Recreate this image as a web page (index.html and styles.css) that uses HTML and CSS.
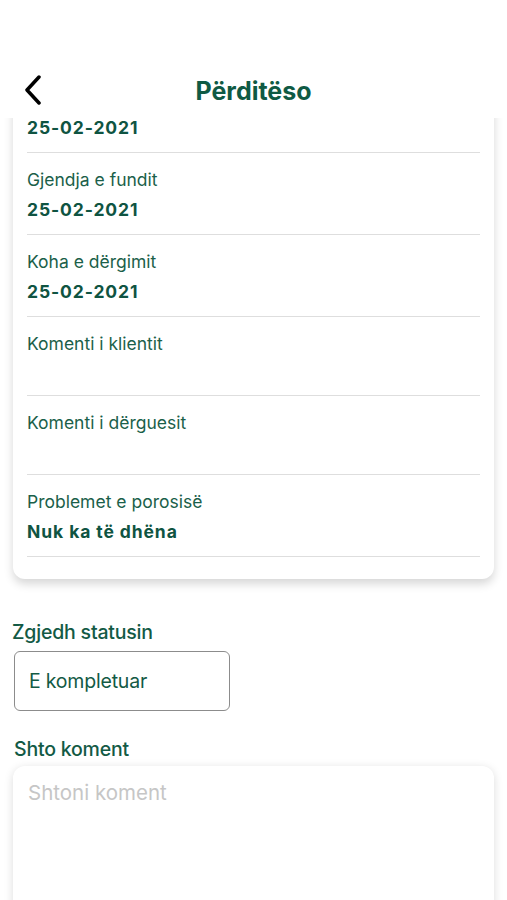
FILE: index.html
```html
<!DOCTYPE html>
<html lang="sq">
<head>
    <meta charset="UTF-8">
    <title>Përditëso</title>
    <link rel="stylesheet" href="styles.css">
</head>
<body>
    <header class="topbar">
        <button class="back" aria-label="Kthehu">
            <svg width="18" height="30" viewBox="0 0 18 30"><path d="M15 2 L3 15 L15 28" fill="none" stroke="#000" stroke-width="3.5" stroke-linecap="round" stroke-linejoin="round"/></svg>
        </button>
        <h1 class="title">Përditëso</h1>
    </header>

    <main class="content">
        <section class="card">
            <div class="row">
                <div class="label">Data e porosisë</div>
                <div class="value">25-02-2021</div>
            </div>
            <div class="row">
                <div class="label">Gjendja e fundit</div>
                <div class="value">25-02-2021</div>
            </div>
            <div class="row">
                <div class="label">Koha e dërgimit</div>
                <div class="value">25-02-2021</div>
            </div>
            <div class="row">
                <div class="label">Komenti i klientit</div>
                <div class="value empty"></div>
            </div>
            <div class="row">
                <div class="label">Komenti i dërguesit</div>
                <div class="value empty"></div>
            </div>
            <div class="row">
                <div class="label">Problemet e porosisë</div>
                <div class="value">Nuk ka të dhëna</div>
            </div>
        </section>

        <div class="form">
            <label class="field-title">Zgjedh statusin</label>
            <div class="select">E kompletuar</div>

            <label class="field-title second">Shto koment</label>
            <textarea class="comment" placeholder="Shtoni koment"></textarea>
        </div>
    </main>
</body>
</html>
```

FILE: styles.css
```css
* {
    box-sizing: border-box;
}
html, body {
    margin: 0;
    height: 900px;
    overflow: hidden;
}
body {
    display: flex;
    flex-direction: column;
    background: #fff;
    font-family: 'Inter', 'Liberation Sans', sans-serif;
    color: #155c47;
}
.topbar {
    height: 118px;
    flex-shrink: 0;
    display: flex;
    align-items: flex-end;
    justify-content: center;
    position: relative;
    background: #fff;
    z-index: 2;
    padding-bottom: 12px;
}
.back {
    position: absolute;
    left: 24px;
    top: 75px;
    border: none;
    background: none;
    padding: 0;
    cursor: pointer;
}
.title {
    margin: 0;
    font-size: 25px;
    font-weight: 700;
    color: #0f5a44;
    line-height: 30px;
}
.content {
    flex: 1;
    overflow: hidden;
}
.card {
    margin: -47px 13px 0;
    padding: 0 14px 22px;
    background: #fff;
    border-radius: 12px;
    box-shadow: 0 5px 10px rgba(0, 0, 0, 0.16);
}
.row {
    padding: 16px 0 12px;
    border-bottom: 1px solid #dedede;
}
.label {
    font-size: 17.5px;
    line-height: 22px;
    color: #1b5f4a;
}
.value {
    margin-top: 7px;
    font-size: 17.5px;
    line-height: 24px;
    font-weight: 700;
    letter-spacing: 0.9px;
    color: #0f5442;
}
.value.empty {
    height: 21px;
}
.form {
    padding: 41px 13px 0 12px;
    display: flex;
    flex-direction: column;
    align-items: flex-start;
}
.field-title {
    font-size: 19.5px;
    line-height: 24px;
    font-weight: 500;
    color: #135a45;
    letter-spacing: -0.2px;
}
.field-title.second {
    margin-top: 26px;
    padding-left: 2px;
}
.select {
    margin: 7px 0 0 2px;
    width: 216px;
    height: 60px;
    border: 1.5px solid #8c8c8c;
    border-radius: 6px;
    padding: 0 14px;
    display: flex;
    align-items: center;
    font-size: 19.5px;
    color: #135a45;
    letter-spacing: -0.2px;
}
.comment {
    margin: 5px 0 0 1px;
    width: calc(100% - 1px);
    height: 200px;
    border: none;
    border-radius: 12px;
    box-shadow: 0 2px 10px rgba(0, 0, 0, 0.14);
    padding: 14px 15px;
    font-family: inherit;
    font-size: 20.5px;
    resize: none;
    outline: none;
}
.comment::placeholder {
    color: #c6c6c6;
}
```
